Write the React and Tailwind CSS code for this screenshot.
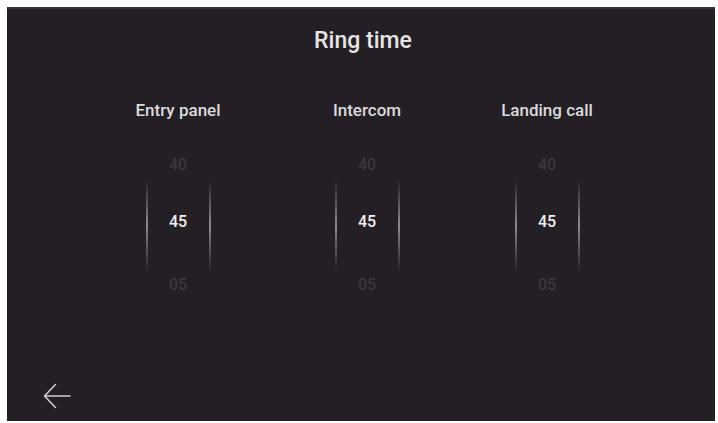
import React from 'react';

const columns = [
    { label: 'Entry panel', gap: 'ml-[111px]' },
    { label: 'Intercom', gap: 'ml-[69px]' },
    { label: 'Landing call', gap: 'ml-[60px]' },
];

function Line() {
    return <div className="w-[2px] h-[93px] bg-linear-to-b from-transparent via-[#8e8a90] to-transparent" />;
}

function Picker({ label, gap }) {
    return (
        <div className={`${gap} w-[120px] flex flex-col items-center`}>
            <p className="text-[17px] leading-[22px] font-medium text-[#dcdadc]">{label}</p>
            <div className="mt-[34px] flex items-center">
                <Line />
                <div className="w-[61px] flex flex-col items-center text-[16px] leading-[20px] font-medium">
                    <span className="text-[#3b373c]">40</span>
                    <span className="mt-[37px] text-[#f0eef0]">45</span>
                    <span className="mt-[43px] text-[#3b373c]">05</span>
                </div>
                <Line />
            </div>
        </div>
    );
}

export default function App() {
    return (
        <div className="w-[718px] h-[423px] bg-white pt-[7px] pl-[7px]" style={{ fontFamily: 'Roboto, "Liberation Sans", sans-serif' }}>
            <div className="w-[708px] h-[414px] bg-[#231f24] border-t-2 border-[#38353a] flex flex-col">
                {/* Title */}
                <h1 className="pt-[18px] text-center text-[23px] leading-[28px] font-medium text-[#e6e4e6] pl-[4px]">Ring time</h1>

                {/* Pickers */}
                <div className="mt-[44px] flex">
                    {columns.map((c) => (
                        <Picker key={c.label} label={c.label} gap={c.gap} />
                    ))}
                </div>

                {/* Back */}
                <div className="mt-auto pl-[36px] pb-[12px]">
                    <svg width="28" height="26" viewBox="0 0 28 26" fill="none" stroke="#cfcccf" strokeWidth="1.6" strokeLinecap="round" strokeLinejoin="round">
                        <path d="M27 13H1.5M12.5 1.5L1.5 13l11 11.5" />
                    </svg>
                </div>
            </div>
        </div>
    );
}
